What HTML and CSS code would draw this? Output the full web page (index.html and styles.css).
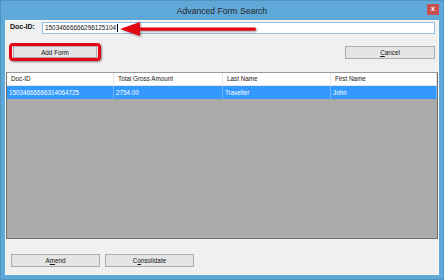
FILE: index.html
```html
<!DOCTYPE html>
<html lang="en">
<head>
    <meta charset="UTF-8">
    <title>Advanced Form Search</title>
    <link rel="stylesheet" href="styles.css">
</head>
<body>
    <div class="window">
        <div class="titlebar">
            <span class="title">Advanced Form Search</span>
            <div class="close">x</div>
        </div>
        <div class="client">
            <div class="search-row">
                <label class="label">Doc-ID:</label>
                <div class="textbox">15034666666296125104<span class="caret"></span></div>
            </div>
            <div class="action-row">
                <div class="highlight">
                    <button class="btn btn-add">Add Form</button>
                </div>
                <button class="btn btn-cancel"><u>C</u>ancel</button>
            </div>
            <div class="list">
                <div class="list-head">
                    <div class="col">Doc-ID</div>
                    <div class="col">Total Gross Amount</div>
                    <div class="col">Last Name</div>
                    <div class="col">First Name</div>
                </div>
                <div class="list-row selected">
                    <div class="cell">15034666666314064725</div>
                    <div class="cell">2754.00</div>
                    <div class="cell">Traveller</div>
                    <div class="cell">John</div>
                </div>
            </div>
            <div class="bottom-row">
                <button class="btn">A<u>m</u>end</button>
                <button class="btn">C<u>o</u>nsolidate</button>
            </div>
        </div>

        <!-- annotation arrow drawn over the dialog -->
        <svg class="arrow" width="150" height="20" viewBox="0 0 150 20">
            <g class="arrow-shape">
                <polygon points="0,9 20,2 20,16" fill="#e30613"/>
                <rect x="18" y="7.5" width="118" height="3.2" rx="1.5" fill="#e30613"/>
            </g>
        </svg>
    </div>
</body>
</html>
```

FILE: styles.css
```css
:root {
    --frame-color: #5fa9d8;
    --client-color: #f0f0f0;
    --select-color: #3399ff;
    --workspace-color: #ababab;
    --mark-color: #e30613;
}

body, html {
    margin: 0;
    padding: 0;
    font-family: 'Liberation Sans', Arial, sans-serif;
    overflow: hidden;
}

.window {
    position: relative;
    width: 444px;
    height: 280px;
    box-sizing: border-box;
    background-color: var(--frame-color);
    border: 1px solid #4f93c0;
    display: flex;
    flex-direction: column;
}

.titlebar {
    height: 19px;
    display: flex;
    align-items: center;
    justify-content: center;
    position: relative;
}

.title {
    font-size: 8.6px;
    color: #262626;
    margin-top: 1px;
}

.close {
    position: absolute;
    top: 3px;
    right: 4px;
    width: 12px;
    height: 11px;
    background-color: #c75050;
    color: #ffffff;
    font-size: 7px;
    font-weight: bold;
    line-height: 10px;
    text-align: center;
}

.client {
    height: 255px;
    margin: 0 4px;
    box-sizing: border-box;
    background-color: var(--client-color);
    border: 1px solid #f7f7f7;
    padding-top: 1px;
    display: flex;
    flex-direction: column;
}

.search-row {
    display: flex;
    align-items: center;
    height: 12px;
    margin-right: 3px;
}

.label {
    font-size: 7px;
    font-weight: bold;
    color: #111;
    margin-left: 4px;
    width: 32px;
    align-self: flex-start;
    margin-top: 1px;
}

.textbox {
    flex: 1;
    height: 12px;
    box-sizing: border-box;
    background-color: #ffffff;
    border: 1px solid #8fc0ea;
    font-size: 6.4px;
    line-height: 10px;
    padding-left: 2px;
    color: #111;
    display: flex;
    align-items: center;
}

.caret {
    display: inline-block;
    width: 1px;
    height: 8px;
    background-color: #000;
    margin-left: 1px;
}

.action-row {
    margin-top: 9px;
    margin-right: 3px;
    height: 18px;
    display: flex;
    align-items: center;
    justify-content: space-between;
}

.highlight {
    margin-left: 3px;
    border: 3px solid var(--mark-color);
    border-radius: 4px;
    padding: 0 1px;
    height: 12px;
    display: flex;
    align-items: center;
    box-shadow: 1px 1px 2px rgba(0, 0, 0, 0.45);
}

.btn {
    width: 89px;
    height: 13px;
    padding: 0;
    box-sizing: border-box;
    background-color: #e5e5e5;
    border: 1px solid #adadad;
    border-radius: 0;
    font-family: 'Liberation Sans', Arial, sans-serif;
    font-size: 6.3px;
    color: #111;
}

.btn-add {
    width: 84px;
    height: 12px;
}

.btn-cancel {
    width: 90px;
}

.list {
    margin-top: 11px;
    height: 167px;
    box-sizing: border-box;
    border: 1px solid #6e6e6e;
    border-top-color: #9a9a9a;
    background-color: var(--workspace-color);
    display: flex;
    flex-direction: column;
}

.list-head, .list-row {
    display: grid;
    grid-template-columns: 107px 109px 108px 1fr;
    height: 12px;
    font-size: 6.3px;
}

.list-head {
    background-color: #ffffff;
    border-bottom: 1px solid #e5e5e5;
    color: #222;
}

.col {
    padding-left: 4px;
    line-height: 12px;
    border-right: 1px solid #e5e5e5;
}

.list-row {
    height: 13px;
}

.selected {
    background-color: var(--select-color);
    color: #ffffff;
}

.cell {
    padding-left: 2px;
    line-height: 13px;
    border-right: 1px solid #6fb5ff;
}

.bottom-row {
    margin-top: 15px;
    margin-left: 5px;
    display: flex;
    gap: 5px;
}

.arrow {
    position: absolute;
    left: 119px;
    top: 19px;
    overflow: visible;
}

.arrow-shape {
    filter: drop-shadow(1px 1px 1px rgba(0, 0, 0, 0.4));
}
```
